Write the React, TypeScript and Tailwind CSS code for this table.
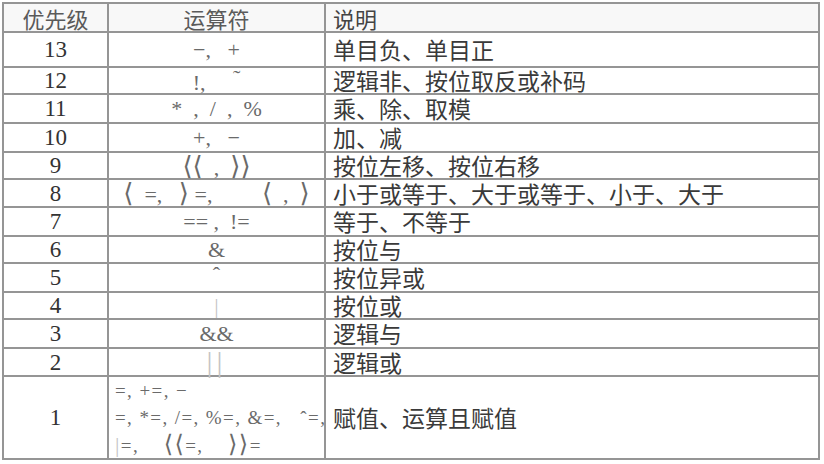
import React from "react";

type Row = {
  level: string;
  op: React.ReactNode;
  desc: string;
  h: string;
};

const serif = "font-['Liberation_Serif','Noto_Sans_CJK_SC',serif]";
const cjk = "font-['Noto_Sans_CJK_SC',sans-serif]";
const chev = "font-['DejaVu_Sans',serif] text-[26px]";
const chevSm = "font-['DejaVu_Sans',serif] text-[24px]";

const rows: Row[] = [
  { level: "13", op: "−,   +", desc: "单目负、单目正", h: "h-[35px]" },
  {
    level: "12",
    op: (
      <>
        !,     <span className="align-[5px]">˜</span>
      </>
    ),
    desc: "逻辑非、按位取反或补码",
    h: "h-[27px]",
  },
  { level: "11", op: "*  ,  /  ,  %", desc: "乘、除、取模", h: "h-[29px]" },
  { level: "10", op: "+,   −", desc: "加、减", h: "h-[29px]" },
  {
    level: "9",
    op: (
      <>
        <span className={chev}>⟨⟨</span>  ,  <span className={chev}>⟩⟩</span>
      </>
    ),
    desc: "按位左移、按位右移",
    h: "h-[27px]",
  },
  {
    level: "8",
    op: (
      <>
        <span className={chev}>⟨</span>  =,   <span className={chev}>⟩</span> =,         <span className={chev}>⟨</span>  ,  <span className={chev}>⟩</span>
      </>
    ),
    desc: "小于或等于、大于或等于、小于、大于",
    h: "h-[28px]",
  },
  { level: "7", op: "== ,  !=", desc: "等于、不等于", h: "h-[29px]" },
  { level: "6", op: "&", desc: "按位与", h: "h-[27px]" },
  {
    level: "5",
    op: <span className="align-[6px]">ˆ</span>,
    desc: "按位异或",
    h: "h-[29px]",
  },
  { level: "4", op: <span className="text-[#c4c4c4]">|</span>, desc: "按位或", h: "h-[27px]" },
  { level: "3", op: "&&", desc: "逻辑与", h: "h-[29px]" },
  {
    level: "2",
    op: <span className="text-[30px] text-[#c4c4c4] tracking-[4px]">||</span>,
    desc: "逻辑或",
    h: "h-[28px]",
  },
];

export default function App() {
  return (
    <div className="w-[824px] h-[464px] bg-white pt-[2px] pl-[2px] overflow-hidden">
      <div className="w-[818px] border-2 border-[#959595] flex flex-col">
        <div className="flex h-[29px] border-b-2 border-[#959595] bg-[#f8f8f8]">
          <div className={"w-[105px] shrink-0 border-r-2 border-[#959595] flex items-center justify-center text-[22px] leading-none text-[#5a5a5a] " + cjk}>
            优先级
          </div>
          <div className={"w-[217px] shrink-0 border-r-2 border-[#959595] flex items-center justify-center text-[22px] leading-none text-[#5a5a5a] " + cjk}>
            运算符
          </div>
          <div className={"flex-1 flex items-center pl-[7px] text-[22px] leading-none text-[#444] " + cjk}>
            说明
          </div>
        </div>

        {rows.map((r) => (
          <div key={r.level} className={"flex border-b-2 border-[#959595] " + r.h}>
            <div className={"w-[105px] shrink-0 border-r-2 border-[#959595] flex items-center justify-center text-[23px] leading-none text-[#333] " + serif}>
              {r.level}
            </div>
            <div className={"w-[217px] shrink-0 border-r-2 border-[#959595] flex items-center justify-center text-[22px] leading-none text-[#6a6a6a] whitespace-pre " + serif}>
              <span>{r.op}</span>
            </div>
            <div className={"flex-1 flex items-center pl-[7px] text-[23px] leading-none text-[#3a3a3a] " + cjk}>
              {r.desc}
            </div>
          </div>
        ))}

        <div className="flex h-[81px]">
          <div className={"w-[105px] shrink-0 border-r-2 border-[#959595] flex items-center justify-center text-[23px] leading-none text-[#333] " + serif}>
            1
          </div>
          <div className={"w-[217px] shrink-0 border-r-2 border-[#959595] flex flex-col justify-center pl-[6px] text-[19px] leading-[27px] text-[#6a6a6a] whitespace-pre tracking-[1.4px] overflow-hidden " + serif}>
            <div>=, +=, −</div>
            <div>=, *=, /=, %=, &amp;=,   ˆ=,</div>
            <div>
              <span className="text-[#c4c4c4] text-[22px]">|</span>=,    <span className={chevSm}>⟨⟨</span>=,    <span className={chevSm}>⟩⟩</span>=
            </div>
          </div>
          <div className={"flex-1 flex items-center pl-[7px] text-[23px] leading-none text-[#3a3a3a] " + cjk}>
            赋值、运算且赋值
          </div>
        </div>
      </div>
    </div>
  );
}
